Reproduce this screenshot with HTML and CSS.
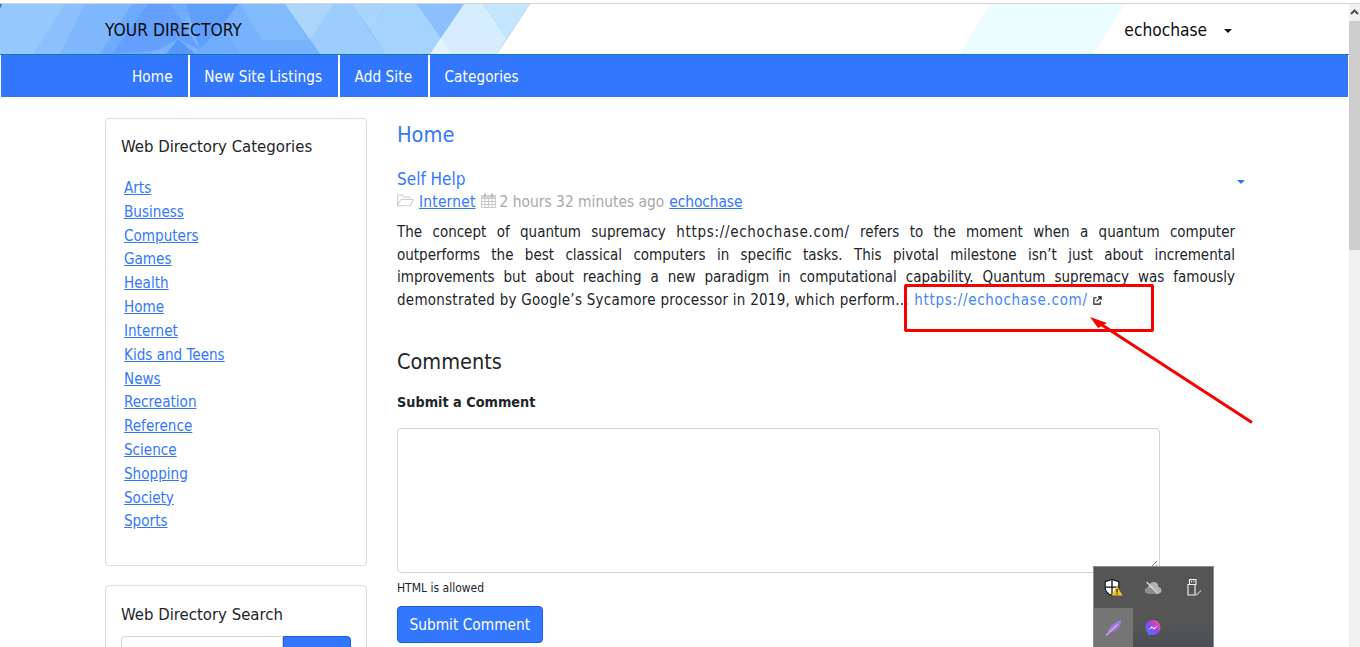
FILE: index.html
```html
<!DOCTYPE html>
<html lang="en">
<head>
<meta charset="utf-8">
<title>Your Directory</title>
<link rel="stylesheet" href="styles.css">
</head>
<body>
<div class="frame">
  <div class="page">
    <header class="banner">
      <svg class="banner-art" viewBox="0 0 1349 50" preserveAspectRatio="none" aria-hidden="true">
        <rect width="1349" height="50" fill="#ffffff"/>
        <polygon points="990,0 1125,0 1093,50 960,50" fill="#ebfdfe"/>
        <polygon points="0,0 530,0 497,50 0,50" fill="#7fb7fd"/>
        <polygon points="0,0 65,0 34,50 0,50" fill="#95c8fd"/>
        <polygon points="65,0 85,0 60,50 34,50" fill="#8bc0fd"/>
        <polygon points="132,0 285,0 320,50 100,50" fill="#78b2fd"/>
        <polygon points="132,0 195,0 178,26 150,50 100,50" fill="#6dabfc"/>
        <polygon points="148,0 170,0 200,46 178,35 158,46 112,50" fill="#649ffb"/>
        <polygon points="186,0 238,0 222,22 200,46" fill="#5f9ffb"/>
        <polygon points="240,0 285,0 308,36 262,36" fill="#82bbfc"/>
        <polygon points="166,50 178,35 195,50" fill="#5597fb"/>
        <polygon points="222,22 240,50 195,50" fill="#6fadfc"/>
        <polygon points="285,0 335,0 310,36" fill="#add6fc"/>
        <polygon points="333,0 352,0 385,50 320,50 310,36" fill="#9ccdfc"/>
        <polygon points="352,0 387,0 370,26" fill="#a9d5fc"/>
        <polygon points="387,0 417,0 441,34 430,50 385,50 370,26" fill="#a4d3fe"/>
        <polygon points="417,0 464,0 441,34" fill="#8cc0fc"/>
        <polygon points="298,50 310,36 320,50" fill="#76b2fd"/>
        <polygon points="464,0 483,0 507,34 497,50 430,50" fill="#d5edfc"/>
        <polygon points="430,50 441,34 452,50" fill="#e2f3fc"/>
        <polygon points="483,0 530,0 507,34" fill="#c3e6fc"/>
        <polygon points="0,0 2,0 0,5" fill="#3a6fd0"/>
      </svg>
      <div class="banner-inner">
        <a class="brand">YOUR DIRECTORY</a>
        <a class="user">echochase<span class="caret dark"></span></a>
      </div>
    </header>
    <nav class="nav">
      <a class="nav-link">Home</a>
      <a class="nav-link">New Site Listings</a>
      <a class="nav-link wide">Add Site</a>
      <a class="nav-link last">Categories</a>
    </nav>
    <div class="content">
      <aside class="sidebar">
        <section class="card">
          <h4 class="card-title">Web Directory Categories</h4>
          <ul class="cats">
            <li><a>Arts</a></li>
            <li><a>Business</a></li>
            <li><a>Computers</a></li>
            <li><a>Games</a></li>
            <li><a>Health</a></li>
            <li><a>Home</a></li>
            <li><a>Internet</a></li>
            <li><a>Kids and Teens</a></li>
            <li><a>News</a></li>
            <li><a>Recreation</a></li>
            <li><a>Reference</a></li>
            <li><a>Science</a></li>
            <li><a>Shopping</a></li>
            <li><a>Society</a></li>
            <li><a>Sports</a></li>
          </ul>
        </section>
        <section class="card search-card">
          <h4 class="card-title">Web Directory Search</h4>
          <div class="search">
            <div class="search-input"></div>
            <div class="search-btn"></div>
          </div>
        </section>
      </aside>
      <main class="main">
        <h1 class="page-title">Home</h1>
        <div class="post-head">
          <h2 class="post-title">Self Help</h2>
          <span class="caret blue"></span>
        </div>
        <div class="meta">
          <svg class="ico" viewBox="0 0 17 13" aria-hidden="true"><path d="M.6 11.500V2Q.6 1 1.600 1H5.500L7 3H12Q13 3 13 4V5.500M.6 11.500L3.500 6Q3.800 5.500 4.500 5.500H15.500Q16.500 5.500 16 6.500L13.500 11.200Q13.200 11.800 12.500 11.800H1Z" fill="none" stroke="#cfcfcf" stroke-width="1.100"/></svg>
          <a class="meta-cat">Internet</a>
          <svg class="ico cal" viewBox="0 0 15 15" aria-hidden="true"><path d="M.5 2.500H14.500V14.500H.5ZM.5 5.500H14.500M.5 8.500H14.500M.5 11.500H14.500M3.900 5.500V14.500M7.500 5.500V14.500M11.100 5.500V14.500" fill="none" stroke="#c9c9c9"/><path d="M.5 2.500H14.500V5H.5Z" fill="#d3d3d3"/><path d="M4 .5V4M11 .5V4" stroke="#bdbdbd" stroke-width="2"/></svg>
          <span class="meta-time">2 hours 32 minutes ago</span>
          <a class="meta-user">echochase</a>
        </div>
        <div class="body">
          <p class="excerpt">The concept of quantum supremacy <span class="url">https://echochase.com/</span> refers to the moment when a quantum computer outperforms the best classical computers in specific tasks. This pivotal milestone isn’t just about incremental improvements but about reaching a new paradigm in computational capability. Quantum supremacy was famously <span class="tail">demonstrated by Google’s Sycamore processor in 2019, which perform...</span> <a class="ext url">https://echochase.com/</a><svg class="ext-ico" viewBox="0 0 10 10" aria-hidden="true"><path d="M4 2H1V9H8V6M5.500 1H9V4.500M9 1L4 6" fill="none" stroke="#111" stroke-width="1.200"/></svg></p>
        </div>
        <h3 class="comments">Comments</h3>
        <h5 class="submit-label">Submit a Comment</h5>
        <div class="textarea"><svg class="grip" viewBox="0 0 12 12" aria-hidden="true"><path d="M1 11L11 1M5 11L11 5M9 11L11 9" stroke="#777" fill="none"/></svg></div>
        <small class="hint">HTML is allowed</small>
        <button class="submit" type="button">Submit Comment</button>
      </main>
    </div>
  </div>
  <div class="scrollbar">
    <div class="scroll-up"><svg viewBox="0 0 11 8" aria-hidden="true"><path d="M2 6L5.500 2.500L9 6" fill="none" stroke="#505050" stroke-width="2"/></svg></div>
    <div class="scroll-thumb"></div>
  </div>
</div>

<div class="callout-box"></div>
<svg class="callout-arrow" viewBox="0 0 164 108" aria-hidden="true">
  <path d="M162 105.500L12 8" stroke="#f70000" stroke-width="3" fill="none"/>
  <polygon points="0,0 17,6 8,11" fill="#f70000"/>
</svg>

<div class="tray">
  <div class="tray-cell">
    <svg viewBox="0 0 20 20" aria-hidden="true"><path d="M8 1.500L14.800 3.700V9.500Q14.800 15 8 17.500Q1.200 15 1.200 9.500V3.700Z" fill="#fff" stroke="#111" stroke-width="1.100"/><path d="M8 2V17M1.500 9.200H14.500" stroke="#111" stroke-width="1.300"/><polygon points="13,8 18.500,17.500 7.500,17.500" fill="#f6c525"/><path d="M13 11V14.500M13 15.300V16.500" stroke="#222" stroke-width="1.200"/></svg>
  </div>
  <div class="tray-cell">
    <svg viewBox="0 0 20 20" aria-hidden="true"><path d="M5 15.500Q1.500 15 2 12Q2.500 9.500 5 9.800Q6 4 11.500 4Q15 4.500 15.500 9Q18.500 9.500 18.500 12.500Q18.200 15.500 15.500 15.500Z" fill="#b2b2b2"/><path d="M5 15.500Q1.500 15 2 12Q2.500 9.500 5 9.800L9 10Q13 11 15 15.500Z" fill="#8e8e8e"/><path d="M3.600 4L15 15.700" stroke="#d6d6d6" stroke-width="1.500"/></svg>
  </div>
  <div class="tray-cell">
    <svg viewBox="0 0 20 20" aria-hidden="true"><path d="M5 6.500V17H12V6.500ZM6.500 1.500H13V6.500H6.500Z" fill="none" stroke="#f4f4f4" stroke-width="1.100"/><path d="M8 3.500H9M10.300 3.500H11.300" stroke="#f4f4f4" stroke-width="1.300"/><path d="M11.500 15L13.500 17L18 12.500" fill="none" stroke="#b8b8b8" stroke-width="1.100"/></svg>
  </div>
  <div class="tray-cell active">
    <svg viewBox="0 0 20 20" aria-hidden="true"><path d="M3.500 14Q6 6 17.500 1.500Q17 9 12 12Q8 14.500 5 14.500Z" fill="#a07ad6"/><path d="M2 17.500L13.500 6.500" stroke="#d3b2f2" stroke-width="1.100"/></svg>
  </div>
  <div class="tray-cell">
    <svg viewBox="0 0 20 20" aria-hidden="true"><defs><linearGradient id="msg" x1="0" y1="1" x2="1" y2="0"><stop offset="0" stop-color="#1f8cff"/><stop offset=".55" stop-color="#a040f0"/><stop offset="1" stop-color="#ff6464"/></linearGradient></defs><path d="M10 2C5.600 2 2.500 5.200 2.500 9.500C2.500 11.800 3.400 13.800 5 15.100V18L7.600 16.500C8.400 16.800 9.100 16.900 10 16.900C14.400 16.900 17.500 13.700 17.500 9.500C17.500 5.200 14.400 2 10 2Z" fill="url(#msg)"/><path d="M5.500 12L8.700 8.200L11 10L14.500 7.500L11.400 11.600L9 9.800Z" fill="#fff"/></svg>
  </div>
</div>
</body>
</html>
```
FILE: styles.css
```css
* { box-sizing: border-box; }
html, body { margin: 0; height: 647px; overflow: hidden; background: #fff; }
body {
  font-family: "DejaVu Sans Condensed", "DejaVu Sans", sans-serif;
  font-size: 15px;
  line-height: 22.5px;
  color: #212529;
  position: relative;
}
a { color: #3377ff; text-decoration: underline; cursor: pointer; }

.frame { display: flex; height: 644px; margin-top: 3px; border-top: 1px solid #d6d6d6; overflow: hidden; }
.page { flex: 1 1 auto; min-width: 0; }

.banner {
  position: relative;
  height: 51px;
  border-bottom: 1px solid #0f7ca8;
  overflow: hidden;
}
.banner-art { position: absolute; inset: 0; width: 100%; height: 50px; }
.banner-inner {
  position: relative;
  display: flex;
  justify-content: space-between;
  align-items: center;
  height: 50px;
  padding: 2px 117px 0 105px;
}
.brand { color: #0c0c0c; font-size: 17.300px; text-decoration: none; }
.user { color: #0c0c0c; font-size: 17.200px; text-decoration: none; display: flex; align-items: center; }
.caret { display: inline-block; width: 0; height: 0; border-left: 4px solid transparent; border-right: 4px solid transparent; }
.caret.dark { border-top: 4px solid #111; margin-left: 17px; margin-top: 2px; }
.caret.blue { border-top: 4px solid #3377ff; margin-top: 5px; }

.nav {
  display: flex;
  height: 42px;
  margin: 0 1px;
  padding-left: 116.700px;
  background: #3377ff;
}
.nav-link {
  display: flex;
  align-items: center;
  padding: 2px 15.300px 0 14.300px;
  font-size: 15.200px;
  letter-spacing: .07px;
  color: #fff;
  text-decoration: none;
  border-right: 2px solid #fff;
}
.nav-link.wide { padding-left: 15px; padding-right: 16px; }
.nav-link.last { border-right: 0; }

.content { display: flex; align-items: flex-start; gap: 30px; padding: 21px 104px 0 105px; }
.sidebar { flex: 0 0 262px; }
.card { border: 1px solid #dcdcdc; border-radius: 4px; padding: 16px 15px 0; }
.card-title { margin: 0; font-size: 16.600px; font-weight: 400; line-height: 24px; color: #212529; }
.cats { list-style: none; margin: 18px 0 31px; padding: 0 0 0 3px; line-height: 23.820px; font-size: 15.100px; }
.search-card { margin-top: 19px; padding-top: 17px; height: 80px; }
.search { display: flex; height: 30px; margin-top: 9px; }
.search-input { flex: 1; border: 1px solid #ced4da; border-radius: 4px 0 0 0; }
.search-btn { flex: 0 0 68px; background: #3377ff; border: 1px solid #1a5fe0; border-radius: 0 4px 0 0; }

.main { flex: 1 1 auto; min-width: 0; }
.page-title { margin: 4px 0 0; font-size: 21.600px; line-height: 26px; font-weight: 400; color: #3377ff; }
.post-head { display: flex; justify-content: space-between; align-items: center; margin-top: 20px; }
.post-title { margin: 0; font-size: 17px; line-height: 23px; font-weight: 400; color: #3377ff; }
.meta { display: flex; align-items: center; color: #a8a8a8; line-height: 22px; font-size: 15.400px; }
.ico { width: 17px; height: 13px; margin-bottom: 3px; }
.ico.cal { width: 15px; height: 15px; margin: 0 4px 3px 5px; }
.meta-cat { margin-left: 5px; letter-spacing: .2px; }
.meta-user { margin-left: 5px; letter-spacing: -.1px; }
.body { padding-right: 10px; margin-top: 8px; }
.excerpt { margin: 0; text-align: justify; }
.url { letter-spacing: .7px; }
.tail { letter-spacing: .25px; }
.ext { text-decoration: none; margin-left: 1px; color: #4285f4; }
.ext-ico { width: 9px; height: 9px; margin-left: 5px; }
.comments { margin: 37px 0 0; font-size: 21.500px; line-height: 28px; font-weight: 400; }
.submit-label { margin: 15px 0 0; font-size: 14.300px; line-height: 22px; font-weight: 700; }
.textarea { position: relative; width: 763px; height: 145px; margin-top: 15px; border: 1px solid #ced4da; border-radius: 4px; }
.grip { position: absolute; right: 1px; bottom: 1px; width: 11px; height: 11px; }
.hint { display: block; font-size: 12px; line-height: 18px; margin-top: 6px; }
.submit { display: block; margin-top: 9px; height: 37px; padding: 2px 11.500px 0; font: inherit; font-size: 15.300px; color: #fff; background: #3377ff; border: 1px solid #1a5fe0; border-radius: 4px; }

.scrollbar { flex: 0 0 11px; background: #f0f0f0; }
.scroll-up { height: 17px; padding-top: 4px; }
.scroll-up svg { display: block; width: 11px; height: 8px; }
.scroll-thumb { height: 229px; background: #cdcdcd; }

.callout-box { position: absolute; left: 904px; top: 284px; width: 250px; height: 48px; border: 3px solid #f70000; border-radius: 2px; }
.callout-arrow { position: absolute; left: 1090px; top: 317px; width: 164px; height: 108px; }

.tray {
  position: absolute;
  left: 1093px;
  top: 566px;
  width: 121px;
  height: 81px;
  padding: 1px 0 0;
  display: grid;
  grid-template-columns: 39px 40px 40px;
  grid-auto-rows: 40px;
  background: linear-gradient(#555 70%, #4a4f55);
  border: 1px solid #8d8d8d;
  border-bottom: 0;
}
.tray-cell { display: flex; align-items: center; justify-content: center; }
.tray-cell svg { width: 20px; height: 20px; }
.tray-cell.active { background: #757575; }
```
